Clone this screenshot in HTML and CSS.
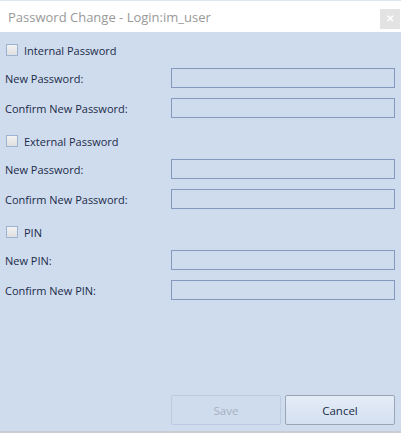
FILE: index.html
```html
<!DOCTYPE html>
<html lang="en">
<head>
  <meta charset="UTF-8">
  <title>Password Change</title>
  <link rel="stylesheet" href="styles.css">
</head>
<body>
  <div class="dialog">
    <div class="title-bar">
      <span class="title">Password Change - Login:im_user</span>
      <button type="button" class="close-btn">&#x2715;</button>
    </div>

    <div class="content">
      <!-- Internal password -->
      <div class="group">
        <label class="check-row"><span class="check"></span>Internal Password</label>
        <div class="field"><label>New Password:</label><span class="input"></span></div>
        <div class="field"><label>Confirm New Password:</label><span class="input"></span></div>
      </div>

      <!-- External password -->
      <div class="group">
        <label class="check-row"><span class="check"></span>External Password</label>
        <div class="field"><label>New Password:</label><span class="input"></span></div>
        <div class="field"><label>Confirm New Password:</label><span class="input"></span></div>
      </div>

      <!-- PIN -->
      <div class="group">
        <label class="check-row"><span class="check"></span>PIN</label>
        <div class="field"><label>New PIN:</label><span class="input"></span></div>
        <div class="field"><label>Confirm New PIN:</label><span class="input"></span></div>
      </div>

      <div class="buttons">
        <button type="button" class="btn" disabled>Save</button>
        <button type="button" class="btn">Cancel</button>
      </div>
    </div>
  </div>
</body>
</html>
```

FILE: styles.css
```css
body {
  margin: 0;
  font-family: "Open Sans", "Noto Sans", sans-serif;
  font-size: 11px;
  color: #1b2b48;
  background: #ffffff;
}
.dialog {
  width: 401px;
  height: 433px;
  box-sizing: border-box;
  display: flex;
  flex-direction: column;
  border-top: 1px solid #dfe6ef;
  border-bottom: 2px solid #c9ccd1;
}
.title-bar {
  height: 31px;
  display: flex;
  align-items: center;
  justify-content: space-between;
  background: #ffffff;
  padding: 0 1px 0 8px;
}
.title {
  font-size: 13px;
  color: #999999;
}
.close-btn {
  width: 20px;
  height: 20px;
  margin-top: 4px;
  border: none;
  padding: 0;
  background: #e3e3e3;
  color: #ffffff;
  font-size: 10px;
  font-weight: bold;
  line-height: 20px;
}
.content {
  flex: 1;
  background: #cfdcee;
  padding: 9px 6px 6px 5px;
  display: flex;
  flex-direction: column;
}
.group {
  display: flex;
  flex-direction: column;
  gap: 10px;
  margin-bottom: 14px;
}
.check-row {
  height: 18px;
  display: flex;
  align-items: center;
  gap: 6px;
  margin-bottom: -1px;
}
.check {
  width: 10px;
  height: 10px;
  margin-left: 1px;
  border: 1px solid #9bb3d3;
  background: linear-gradient(#f2f2f2, #e0e0e0);
}
.field {
  height: 20px;
  display: flex;
  align-items: center;
}
.field label {
  width: 166px;
}
.input {
  width: 224px;
  height: 20px;
  box-sizing: border-box;
  border: 1px solid #8499bd;
  background: #cfdcee;
}
.buttons {
  margin-top: auto;
  display: flex;
  justify-content: flex-end;
  gap: 4px;
}
.btn {
  width: 110px;
  height: 30px;
  font-family: inherit;
  font-size: 11.5px;
  color: #1b2b48;
  border: 1px solid #9aa6b8;
  border-radius: 2px;
  background: linear-gradient(#e4ecf7, #d4e0f0);
}
.btn:disabled {
  color: #a7b0bd;
  border-color: #bccbe0;
  background: #cfdcee;
}
```
